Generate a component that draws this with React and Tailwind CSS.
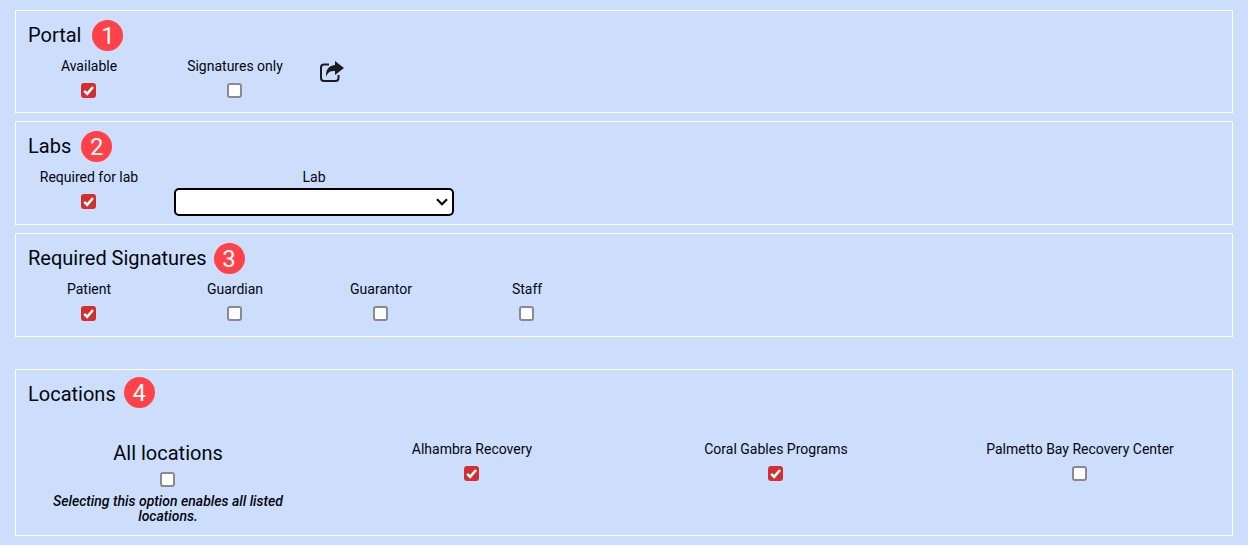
function Check({ checked }) {
  return (
    <span className="relative block w-[15px] h-[15px] mr-px">
      <input
        type="checkbox"
        defaultChecked={checked}
        className="peer block w-[15px] h-[15px] m-0 appearance-none rounded-[3px] border-2 border-[#8a8a8a] bg-white checked:bg-[#d32f2f] checked:border-[#d32f2f]"
      />
      <svg
        viewBox="0 0 15 15"
        className="absolute inset-0 w-[15px] h-[15px] hidden peer-checked:block pointer-events-none"
      >
        <path d="M3.2 7.8 L6.2 10.8 L12 4" fill="none" stroke="#fff" strokeWidth="2.6" />
      </svg>
    </span>
  )
}

function ShareIcon() {
  return (
    <svg viewBox="0 0 24 21" className="w-6 h-[21px] text-[#1c1c1e]">
      <path
        d="M9 3.5 H4 a3 3 0 0 0 -3 3 V17 a3 3 0 0 0 3 3 H15.5 a3 3 0 0 0 3 -3 V14"
        fill="none"
        stroke="currentColor"
        strokeWidth="2"
      />
      <path
        d="M15 0 L24 7 L15 14 V10 C10 10 7.5 11 6.5 16 C5 10 8 4.5 15 4 Z"
        fill="currentColor"
      />
    </svg>
  )
}

function Field({ label, checked }) {
  return (
    <div className="w-[146px] flex flex-col items-center">
      <label className="text-sm leading-[20px] h-[20px]">{label}</label>
      <div className="mt-[7px]">
        <Check checked={checked} />
      </div>
    </div>
  )
}

function Title({ text, n, gap, badgeClass = '' }) {
  return (
    <div className={`flex items-center pl-3 h-[31px] ${gap}`}>
      <h2 className="text-xl font-normal pb-[1px]">{text}</h2>
      <span className={`w-[31px] h-[31px] rounded-full bg-[#ff4148] text-white text-2xl flex items-center justify-center ${badgeClass}`}>
        {n}
      </span>
    </div>
  )
}

function Panel({ children, className }) {
  return <section className={`border border-white ${className}`}>{children}</section>
}

function Location({ label, checked }) {
  return (
    <div className="flex flex-col items-center pt-[29px]">
      <label className="text-sm leading-[20px]">{label}</label>
      <div className="mt-[7px]">
        <Check checked={checked} />
      </div>
    </div>
  )
}

export default function App() {
  return (
    <div className="min-h-screen bg-[#cddefd] px-[15px] pt-[10px] text-[#03060c] font-['Roboto',sans-serif] flex flex-col gap-2">
      <Panel className="h-[103px] pt-[9px]">
        <Title text="Portal" n="1" gap="gap-[11px]" />
        <div className="flex mt-[5px]">
          <Field label="Available" checked />
          <Field label="Signatures only" />
          <div className="pl-3 pt-[5px]">
            <ShareIcon />
          </div>
        </div>
      </Panel>

      <Panel className="h-[104px] pt-[9px]">
        <Title text="Labs" n="2" gap="gap-[10px]" />
        <div className="flex mt-[5px]">
          <Field label="Required for lab" checked />
          <div className="w-[304px] px-3 flex flex-col items-center">
            <label className="text-sm leading-[20px] h-[20px]">Lab</label>
            <div className="relative w-full mt-px">
              <select className="block w-full h-[28px] appearance-none bg-white border-2 border-black rounded-[5px]">
                <option></option>
              </select>
              <svg
                viewBox="0 0 12 8"
                className="absolute right-[6px] top-[10px] w-3 h-2 pointer-events-none"
              >
                <path d="M1 1.2 L6 6.2 L11 1.2" fill="none" stroke="#000" strokeWidth="2.2" />
              </svg>
            </div>
          </div>
        </div>
      </Panel>

      <Panel className="h-[104px] pt-[9px]">
        <Title text="Required Signatures" n="3" gap="gap-[7px]" />
        <div className="flex mt-[5px]">
          <Field label="Patient" checked />
          <Field label="Guardian" />
          <Field label="Guarantor" />
          <Field label="Staff" />
        </div>
      </Panel>

      <Panel className="h-[167px] mt-[24px] pt-[9px]">
        <Title text="Locations" n="4" gap="gap-[8px]" badgeClass="-mt-[4px]" />
        <div className="grid grid-cols-4">
          <div className="flex flex-col items-center pt-[29px] px-8">
            <label className="text-xl leading-[28px]">All locations</label>
            <div className="mt-[5px]">
              <Check />
            </div>
            <p className="mt-[7px] text-sm leading-[15px] italic font-medium text-center">
              Selecting this option enables all listed locations.
            </p>
          </div>
          <Location label="Alhambra Recovery" checked />
          <Location label="Coral Gables Programs" checked />
          <Location label="Palmetto Bay Recovery Center" />
        </div>
      </Panel>
    </div>
  )
}
